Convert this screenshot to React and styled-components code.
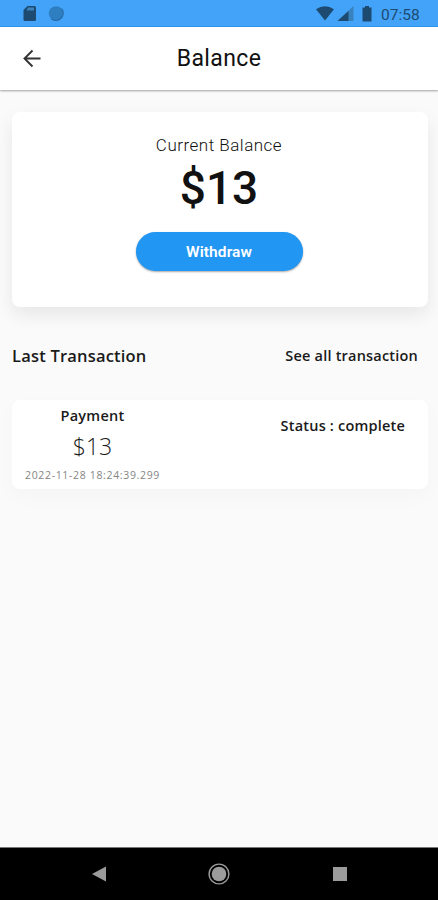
import React from "react";
import styled, { createGlobalStyle } from "styled-components";

const COLORS = {
  statusBar: "#42a3f8",
  statusIcon: "#1d4a70",
  primary: "#2196f3",
  page: "#fafafa",
  navIcon: "#9b9b9b",
};

const GlobalStyle = createGlobalStyle`
  * {
    box-sizing: border-box;
  }

  body {
    margin: 0;
    background: ${COLORS.page};
  }
`;

const Screen = styled.div`
  display: flex;
  flex-direction: column;
  height: 900px;
  overflow: hidden;
  background: ${COLORS.page};
  font-family: Roboto, sans-serif;
  color: #111;
`;

const StatusBar = styled.div`
  flex: none;
  display: flex;
  justify-content: space-between;
  height: 27px;
  padding: 0 16px 0 22px;
  background: ${COLORS.statusBar};
  border-bottom: 1px solid #3197ee;
`;

const StatusGroup = styled.div`
  display: flex;
  align-items: center;
  gap: ${(props) => props.$gap || 0}px;
  padding-top: 2px;
`;

const Clock = styled.span`
  width: 41px;
  padding-top: 1px;
  font-size: 15.5px;
  line-height: 20px;
  white-space: nowrap;
  color: ${COLORS.statusIcon};
`;

const AppBar = styled.header`
  flex: none;
  display: grid;
  grid-template-columns: 64px 1fr 64px;
  align-items: center;
  height: 63px;
  background: #fff;
  box-shadow: 0 1px 2px rgba(0, 0, 0, 0.36);
`;

const BackButton = styled.button`
  display: flex;
  justify-content: center;
  padding: 0;
  border: 0;
  background: none;
`;

const Title = styled.h1`
  margin: 0;
  font-size: 23px;
  font-weight: 400;
  line-height: 30px;
  letter-spacing: 0.4px;
  text-align: center;
`;

const Content = styled.main`
  flex: 1;
  padding: 22px 10px 0 12px;
`;

const BalanceCard = styled.section`
  display: flex;
  flex-direction: column;
  align-items: center;
  height: 195px;
  padding: 22px 2px 0 0;
  border-radius: 8px;
  background: #fff;
  box-shadow: 0 8px 18px rgba(0, 0, 0, 0.08);
`;

const BalanceLabel = styled.div`
  font-size: 17px;
  font-weight: 300;
  line-height: 22px;
  letter-spacing: 0.5px;
`;

const BalanceAmount = styled.div`
  margin-top: 4px;
  font-size: 46px;
  font-weight: 500;
  line-height: 56px;
`;

const WithdrawButton = styled.button`
  width: 167px;
  height: 39px;
  margin-top: 16px;
  padding: 0;
  border: 0;
  border-radius: 20px;
  background: ${COLORS.primary};
  box-shadow: 0 1px 2px rgba(0, 0, 0, 0.35);
  font-family: Roboto, sans-serif;
  font-size: 15.5px;
  font-weight: 600;
  letter-spacing: 0.1px;
  color: #fff;
`;

const Text = styled.span`
  font-family: "Open Sans", sans-serif;
  font-size: ${(props) => props.$size}px;
  font-weight: ${(props) => props.$weight || 600};
  line-height: ${(props) => props.$line || 20}px;
  letter-spacing: ${(props) => props.$spacing || 0}px;
  color: ${(props) => props.$color || "#1a1a1a"};
  white-space: nowrap;
`;

const SectionHeader = styled.div`
  display: flex;
  justify-content: space-between;
  align-items: center;
  height: 24px;
  margin-top: 37px;
  padding-right: 10px;
`;

const Transaction = styled.article`
  display: flex;
  justify-content: space-between;
  height: 89px;
  margin-top: 32px;
  padding: 6px 23px 0 13px;
  border-radius: 8px;
  background: #fff;
  box-shadow: 0 8px 22px rgba(0, 0, 0, 0.025);
`;

const Details = styled.div`
  display: flex;
  flex-direction: column;
  align-items: center;
`;

const Status = styled.div`
  padding-top: 10px;
`;

const NavBar = styled.nav`
  flex: none;
  display: grid;
  grid-template-columns: repeat(3, 120.5px);
  justify-content: center;
  align-items: center;
  justify-items: center;
  height: 53px;
  border-top: 1px solid #777;
  background: #000;
`;

function App() {
  return (
    <Screen>
      <GlobalStyle />
      <StatusBar>
        <StatusGroup $gap={11}>
          <svg width="15" height="18" viewBox="0 0 15 18">
            <path
              d="M5.5 1H12.5Q14 1 14 2.5V14.5Q14 16 12.5 16H3Q1.5 16 1.5 14.5V5Z"
              fill={COLORS.statusIcon}
            />
            <path
              d="M5.8 2.6H12V5.4H4.6Z"
              fill="#3d82b9"
            />
          </svg>
          <svg width="18" height="18" viewBox="0 0 18 18">
            <circle cx="8.2" cy="8.6" r="7.4" fill="#2e7fc2" />
            <path
              d="M14 4A7.4 7.4 0 0 1 3.5 14"
              fill="none"
              stroke="#286ba5"
              strokeWidth="1.2"
            />
          </svg>
        </StatusGroup>
        <StatusGroup $gap={5}>
          <svg width="60" height="18" viewBox="0 0 60 18">
            <path
              d="M0 4.3Q9-2 18 4.3L9 15.5Z"
              fill={COLORS.statusIcon}
            />
            <path d="M37.5 1V16H21.5Z" fill="#3882bd" />
            <path d="M32.5 6V16H21.5Z" fill={COLORS.statusIcon} />
            <path
              d="M49 1H53V2.5H55.5V16.5H46.5V2.5H49Z"
              fill={COLORS.statusIcon}
            />
          </svg>
          <Clock>07:58</Clock>
        </StatusGroup>
      </StatusBar>
      <AppBar>
        <BackButton aria-label="Back">
          <svg width="20" height="20" viewBox="0 0 20 20" fill="none">
            <path
              d="M18.5 9.5H2.5M10.5 1.5L2.5 9.5L10.5 17.5"
              stroke="#333"
              strokeWidth="1.9"
            />
          </svg>
        </BackButton>
        <Title>Balance</Title>
      </AppBar>
      <Content>
        <BalanceCard>
          <BalanceLabel>Current Balance</BalanceLabel>
          <BalanceAmount>$13</BalanceAmount>
          <WithdrawButton>Withdraw</WithdrawButton>
        </BalanceCard>
        <SectionHeader>
          <Text $size={16.5} $spacing={0.2}>
            Last Transaction
          </Text>
          <Text $size={14.5} $spacing={0.2}>
            See all transaction
          </Text>
        </SectionHeader>
        <Transaction>
          <Details>
            <Text $size={14.5} $spacing={0.25}>
              Payment
            </Text>
            <Text $size={23} $weight={300} $line={41}>
              $13
            </Text>
            <Text
              $size={10.5}
              $weight={400}
              $line={16}
              $spacing={0.66}
              $color="#858585"
            >
              2022-11-28 18:24:39.299
            </Text>
          </Details>
          <Status>
            <Text $size={14.5} $spacing={0.2}>
              Status : complete
            </Text>
          </Status>
        </Transaction>
      </Content>
      <NavBar>
        <svg width="16" height="18" viewBox="0 0 16 18">
          <path d="M1 9L15 1.5V16.5Z" fill={COLORS.navIcon} />
        </svg>
        <svg width="22" height="22" viewBox="0 0 22 22">
          <circle
            cx="11"
            cy="11"
            r="9.9"
            fill="none"
            stroke={COLORS.navIcon}
            strokeWidth="1.4"
          />
          <circle cx="11" cy="11" r="7.3" fill={COLORS.navIcon} />
        </svg>
        <svg width="16" height="16" viewBox="0 0 16 16">
          <rect x="1" y="1" width="14" height="14" fill={COLORS.navIcon} />
        </svg>
      </NavBar>
    </Screen>
  );
}

export default App;
